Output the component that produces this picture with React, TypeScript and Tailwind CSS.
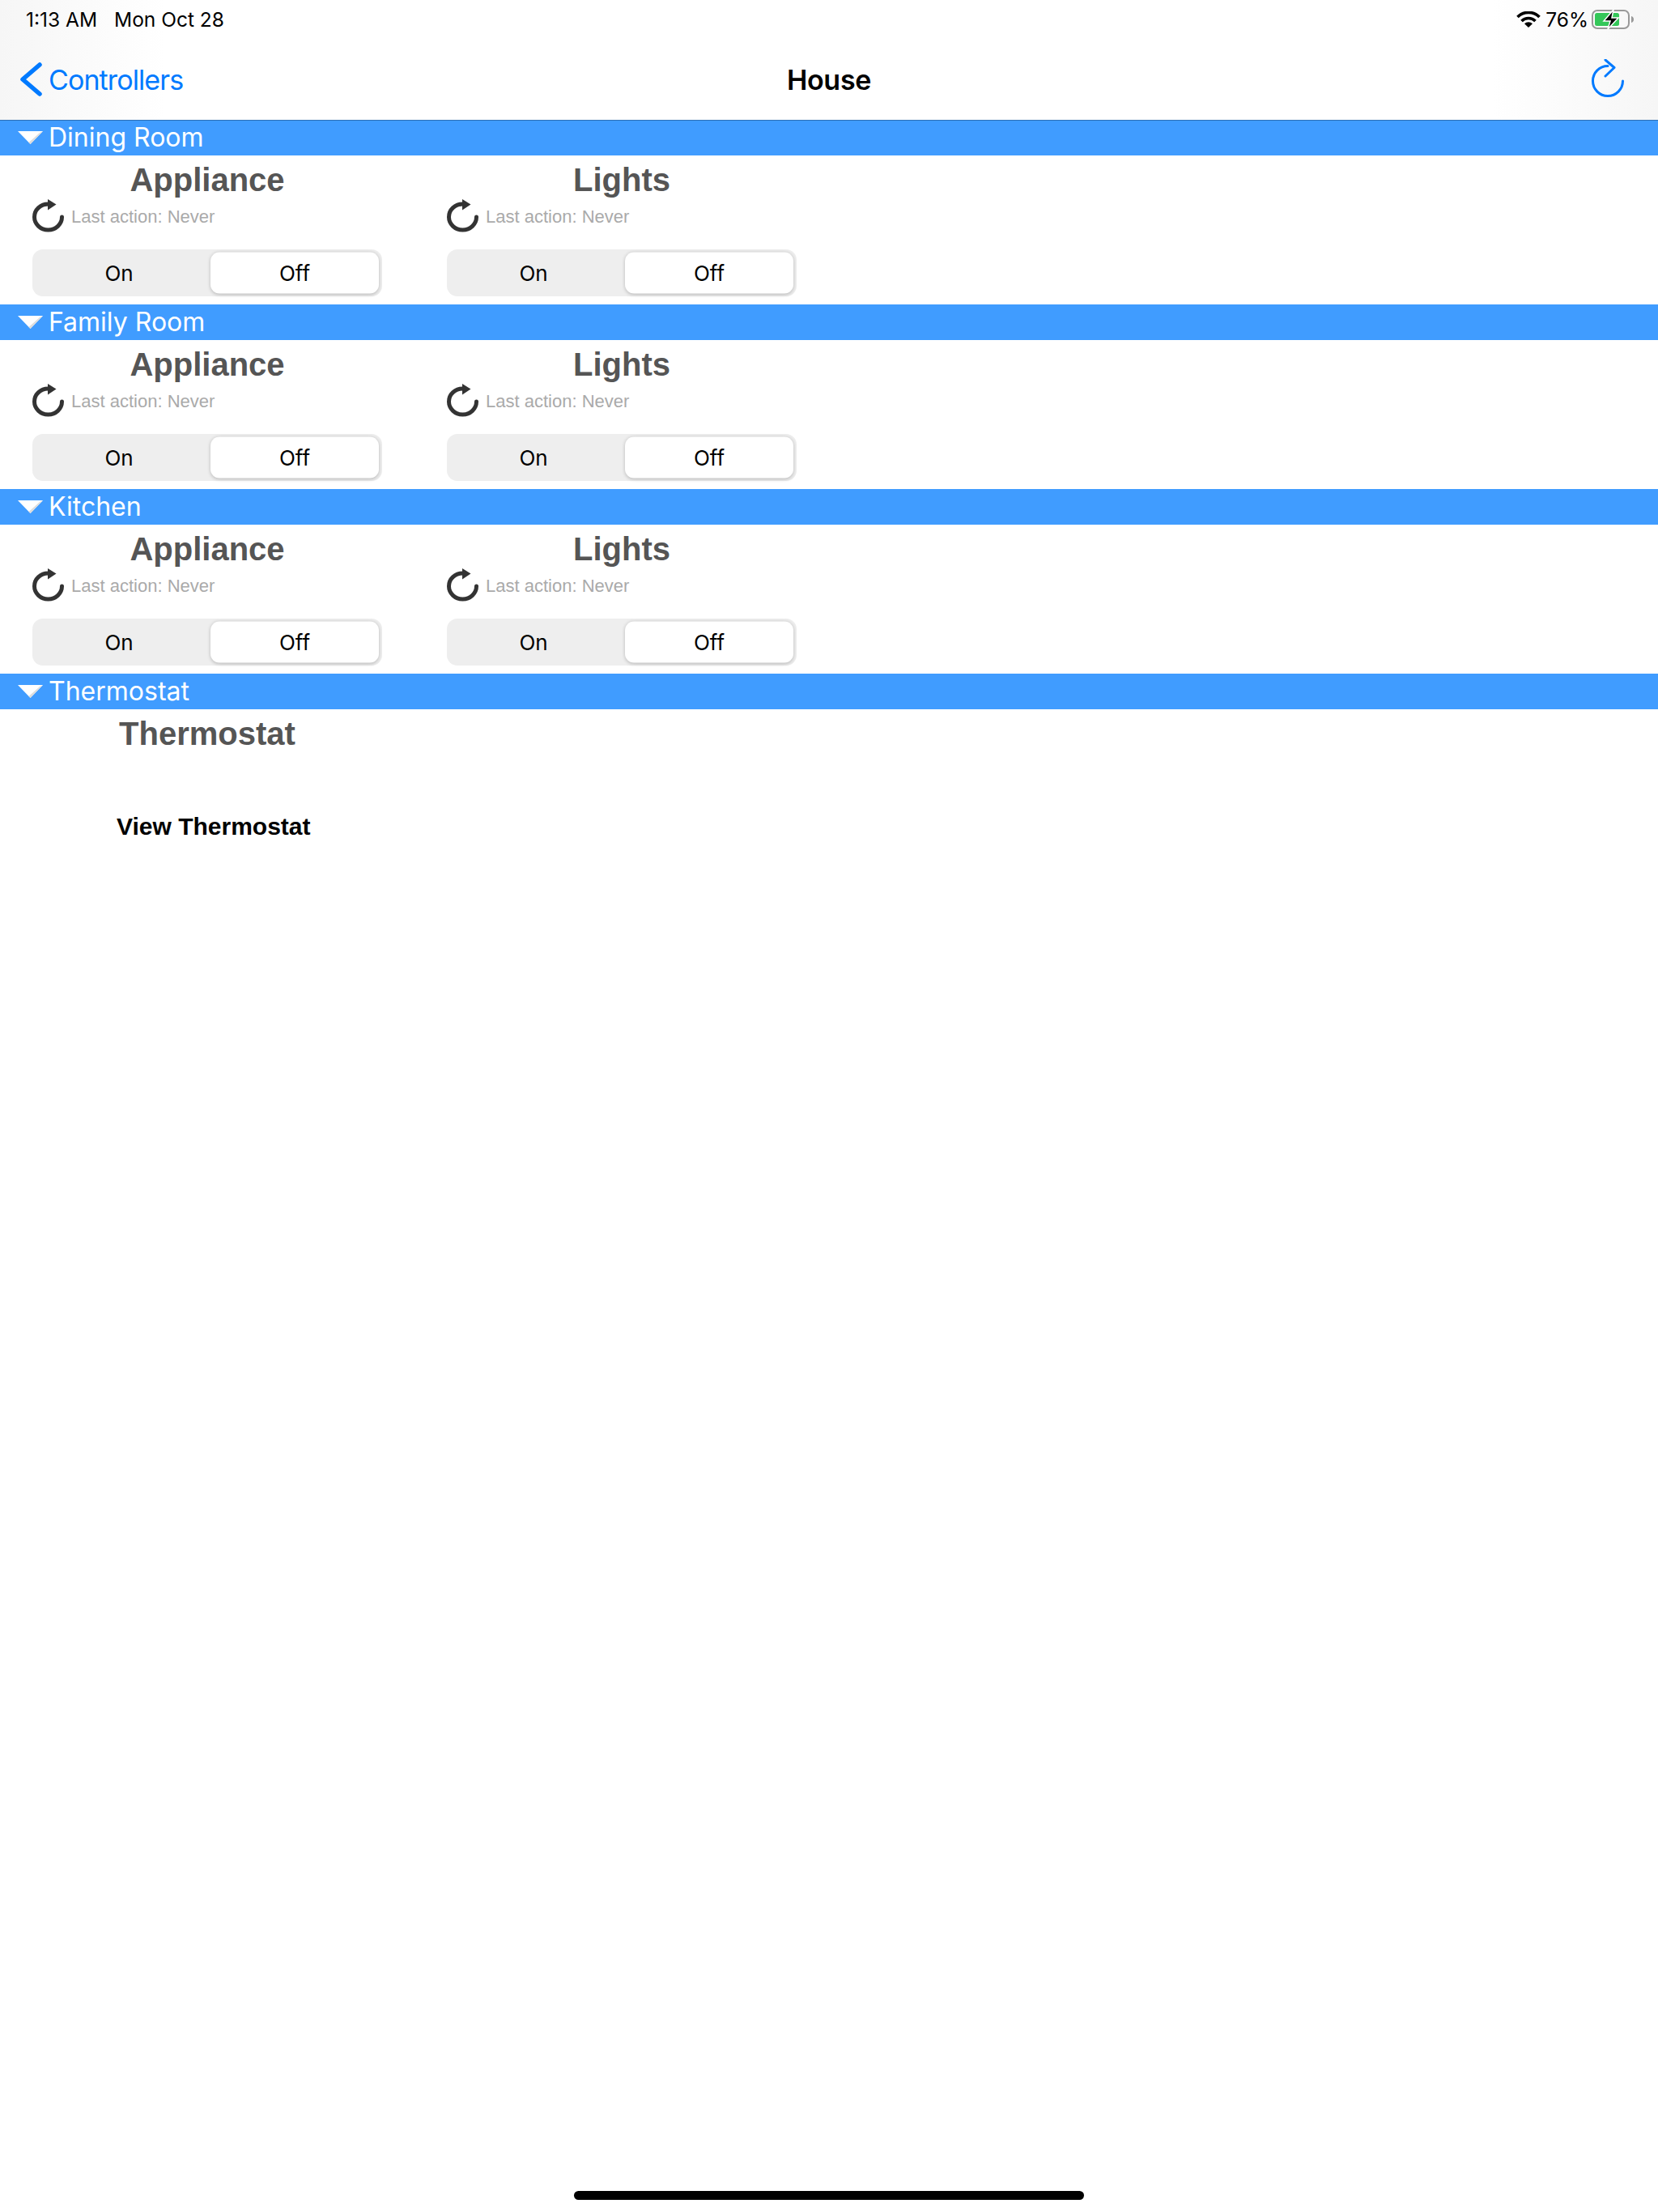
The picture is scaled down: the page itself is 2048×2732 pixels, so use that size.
const ui = "font-['Inter','Noto_Sans',sans-serif]";
const helv = "font-['Liberation_Sans',Arial,sans-serif]";

const rooms = [
  { name: "Dining Room", first: true },
  { name: "Family Room", first: false },
  { name: "Kitchen", first: false },
];

function ReloadIcon() {
  return (
    <svg width="40" height="41" viewBox="0 0 40 41" className="shrink-0">
      <path d="M36.500 22a17 16 0 1 1-17-16" fill="none" stroke="#333" strokeWidth="5" strokeLinecap="round" />
      <path d="M19 0l10.500 6.500L19 13.500z" fill="#333" />
    </svg>
  );
}

function SectionBar({ name, first }: { name: string; first?: boolean }) {
  return (
    <div className={`flex h-[44px] items-center bg-[#409cff] pl-[22px] ${first ? "border-t border-[#2c6fb5]" : ""}`}>
      <svg width="32" height="17" viewBox="0 0 32 17" className="shrink-0">
        <path d="M0 0h31L15.500 16z" fill="#fff" />
        <path d="M31 0L15.500 16l-2-2L27 2z" fill="#dcdcdc" />
      </svg>
      <span className={`${ui} ml-[6px] ${first ? "pb-[2px]" : "pb-0"} text-[32px] leading-[42px] text-white`}>{name}</span>
    </div>
  );
}

function Device({ title }: { title: string }) {
  return (
    <div className="w-[432px]">
      <div className={`${helv} pt-[6px] text-center text-[40px] leading-[48px] font-bold text-[#555]`}>{title}</div>
      <div className="flex h-[41px] items-center gap-[8px]">
        <ReloadIcon />
        <span className={`${helv} pt-[1px] text-[22px] text-[#aaa]`}>Last action: Never</span>
      </div>
      <div className={`${ui} mt-[21px] mb-[10px] flex h-[58px] items-center gap-[6px] rounded-[13px] bg-[#eee] pr-[4px] text-[26px] text-black`}>
        <div className="w-[214px] text-center">On</div>
        <div className="flex h-[51px] w-[208px] -translate-y-[0.5px] items-center justify-center rounded-[11px] bg-white shadow-[0_1px_4px_rgba(0,0,0,0.22)]">
          Off
        </div>
      </div>
    </div>
  );
}

export default function App() {
  return (
    <div className="flex h-[2732px] w-[2048px] flex-col bg-white">
      <header className="h-[148px] bg-[linear-gradient(90deg,#f6f6f6,#fff_10%,#fff_90%,#f6f6f6)]">
        <div className={`${ui} flex h-[48px] items-center justify-between pr-[28px] pl-[32px] text-[24.5px] text-black`}>
          <div className="flex gap-[21px]">
            <span>1:13 AM</span>
            <span>Mon Oct 28</span>
          </div>
          <div className="flex items-center">
            <svg width="30" height="20" viewBox="0 0 30 20">
              <path d="M1.500 7a19 19 0 0 1 27 0M6.500 12a12 12 0 0 1 17 0" fill="none" stroke="#000" strokeWidth="3.600" />
              <path d="M15 20l-5-4.700a7 7 0 0 1 10 0z" fill="#000" />
            </svg>
            <span className="ml-[6px]">76%</span>
            <svg width="54" height="24" viewBox="0 0 54 24" className="ml-[4px]">
              <rect x="1" y="1" width="45" height="22" rx="6" fill="none" stroke="#999" strokeWidth="2" />
              <rect x="4" y="4" width="30" height="16" rx="2.500" fill="#34c759" />
              <path d="M49 8c2 .5 3 2 3 4s-1 3.500-3 4z" fill="#999" />
              <path d="M27 0l-12 14h8l-3 10 13-14h-8z" fill="#000" stroke="#fff" strokeWidth="1.500" />
            </svg>
          </div>
        </div>
        <nav className={`${ui} grid h-[100px] grid-cols-3 items-center`}>
          <div className="flex items-center pl-[25px] text-[34px] tracking-[-0.9px] text-[#007aff]">
            <svg width="28" height="42" viewBox="0 0 28 42">
              <path d="M24 3L3 21l21 18" fill="none" stroke="#007aff" strokeWidth="5.500" strokeLinecap="round" strokeLinejoin="round" />
            </svg>
            <span className="ml-[7px]">Controllers</span>
          </div>
          <div className="text-center text-[34px] font-semibold tracking-[-0.3px] text-black">House</div>
          <div className="flex justify-end pr-[41px]">
            <svg width="42" height="50" viewBox="0 0 42 50">
              <path d="M39.500 27a18.500 18.500 0 1 1-18.500-18.500" fill="none" stroke="#007aff" strokeWidth="3" strokeLinecap="round" />
              <path d="M18 1l11 9.500L18 21" fill="none" stroke="#007aff" strokeWidth="3" strokeLinecap="round" strokeLinejoin="round" />
            </svg>
          </div>
        </nav>
      </header>

      {rooms.map((room) => (
        <section key={room.name}>
          <SectionBar name={room.name} first={room.first} />
          <div className="flex gap-[80px] px-[40px]">
            <Device title="Appliance" />
            <Device title="Lights" />
          </div>
        </section>
      ))}

      <section>
        <SectionBar name="Thermostat" />
        <div className="ml-[40px] w-[432px]">
          <div className={`${helv} pt-[6px] text-center text-[40px] leading-[48px] font-bold text-[#555]`}>Thermostat</div>
        </div>
        <div className={`${helv} mt-[73px] ml-[144px] text-[30px] leading-[36px] font-bold text-black`}>View Thermostat</div>
      </section>

      <div className="mt-auto flex justify-center pb-[15px]">
        <div className="h-[11px] w-[630px] rounded-full bg-black" />
      </div>
    </div>
  );
}
